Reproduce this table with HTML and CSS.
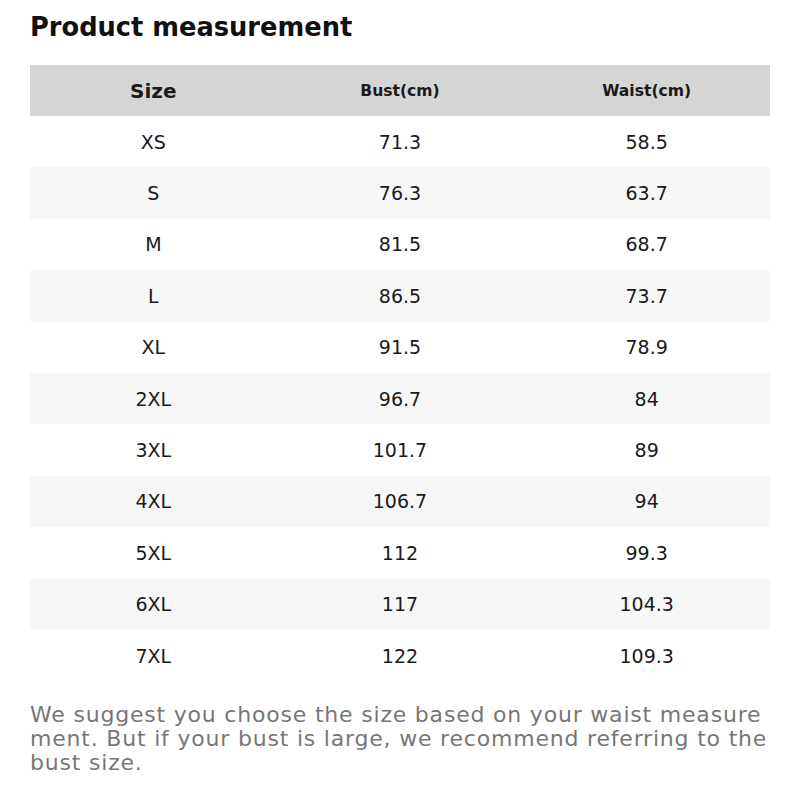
FILE: index.html
```html
<!DOCTYPE html>
<html>
<head>
<meta charset="utf-8">
<link rel="stylesheet" href="styles.css">
</head>
<body>
<div class="page">
  <h1 class="title">Product measurement</h1>
  <table class="size-table">
    <thead>
      <tr><th class="th-size">Size</th><th>Bust(cm)</th><th>Waist(cm)</th></tr>
    </thead>
    <tbody>
      <tr><td>XS</td><td>71.3</td><td>58.5</td></tr>
      <tr><td>S</td><td>76.3</td><td>63.7</td></tr>
      <tr><td>M</td><td>81.5</td><td>68.7</td></tr>
      <tr><td>L</td><td>86.5</td><td>73.7</td></tr>
      <tr><td>XL</td><td>91.5</td><td>78.9</td></tr>
      <tr><td>2XL</td><td>96.7</td><td>84</td></tr>
      <tr><td>3XL</td><td>101.7</td><td>89</td></tr>
      <tr><td>4XL</td><td>106.7</td><td>94</td></tr>
      <tr><td>5XL</td><td>112</td><td>99.3</td></tr>
      <tr><td>6XL</td><td>117</td><td>104.3</td></tr>
      <tr><td>7XL</td><td>122</td><td>109.3</td></tr>
    </tbody>
  </table>
  <p class="note">We suggest you choose the size based on your waist measurement. But if your bust is large, we recommend referring to the bust size.</p>
</div>
</body>
</html>
```
FILE: styles.css
```css
html, body {
  margin: 0;
  padding: 0;
  background: #ffffff;
}
body {
  font-family: "DejaVu Sans", sans-serif;
  color: #1a1a1a;
}
.page {
  padding: 12px 30px 0 30px;
}
.title {
  margin: 0;
  font-size: 25.7px;
  line-height: 30px;
  font-weight: bold;
  color: #111;
}
.size-table {
  margin-top: 23px;
  width: 740px;
  border-collapse: collapse;
  table-layout: fixed;
}
.size-table th {
  background: #d5d5d5;
  height: 51px;
  padding: 0;
  font-size: 15.6px;
  font-weight: bold;
  color: #1a1a1a;
  text-align: center;
  vertical-align: middle;
}
.size-table th.th-size {
  font-size: 20px;
}
.size-table td {
  height: 51.4px;
  padding: 0;
  font-size: 19px;
  text-align: center;
  vertical-align: middle;
  color: #1a1a1a;
}
.size-table tbody tr:nth-child(even) td {
  background: #f7f7f7;
}
.note {
  margin: 22px 0 0 0;
  font-size: 22px;
  line-height: 24px;
  letter-spacing: 0.8px;
  color: #777777;
  word-break: break-all;
}
```
